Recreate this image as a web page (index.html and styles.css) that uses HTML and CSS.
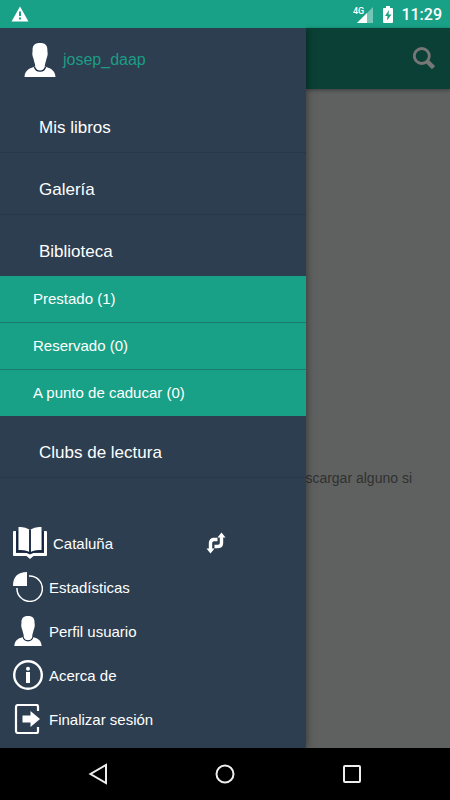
FILE: index.html
```html
<!DOCTYPE html>
<html lang="es">
<head>
<meta charset="utf-8">
<meta name="viewport" content="width=device-width, initial-scale=1">
<title>Biblioteca</title>
<link rel="stylesheet" href="styles.css">
</head>
<body>
<svg class="defs" aria-hidden="true">
  <symbol id="user" viewBox="0 0 32 34">
    <path d="M16 0C10.500 0 8.300 2.500 8.600 8C7.800 11 8.800 14 9.600 16C10 18.500 11 20 11.300 23.500C5 25.500 1 27 .5 34H31.500C31 27 27 25.500 20.700 23.500C21 20 22 18.500 22.400 16C23.200 14 24.200 11 23.400 8C23.700 2.500 21.500 0 16 0Z" fill="#fff"/>
    <path d="M10.500 24C12 29.500 20 29.500 21.500 24" fill="none" stroke="#14233f" stroke-width="1.300"/>
  </symbol>
</svg>
<div class="screen">
  <header class="status">
    <svg class="warning" viewBox="0 0 18 16" role="img" aria-label="Aviso"><path d="M9 .5L17.500 15.500H.5Z" fill="#fff"/><path d="M9 5.500V10M9 11.500V13.500" stroke="#19a187" stroke-width="2"/></svg>
    <svg class="signal" viewBox="0 0 20 17" role="img" aria-label="Señal">
      <path d="M20 1V17H4Z" fill="#74c6b7"/><path d="M14 7V17H4Z" fill="#fff"/>
      <text x="0" y="8" class="network">4G</text>
    </svg>
    <svg class="battery" viewBox="0 0 12 17" role="img" aria-label="Batería"><path d="M4 0H8V2H10Q11 2 11 3V16Q11 17 10 17H2Q1 17 1 16V3Q1 2 2 2H4Z" fill="#fff"/><path d="M7 4L3 10H5.500L5 14.500L9.500 8.500H6.500Z" fill="#19a187"/></svg>
    <time>11:29</time>
  </header>
  <div class="body">
    <nav class="drawer">
      <div class="account"><svg class="avatar" aria-hidden="true"><use href="#user"/></svg><span>josep_daap</span></div>
      <a class="item" href="#">Mis libros</a>
      <a class="item" href="#">Galería</a>
      <a class="item open" href="#">Biblioteca</a>
      <div class="sub">
        <a href="#">Prestado (1)</a>
        <a href="#">Reservado (0)</a>
        <a href="#">A punto de caducar (0)</a>
      </div>
      <a class="item" href="#">Clubs de lectura</a>
      <div class="tools">
        <div class="tool">
          <a class="library" href="#">
            <svg class="book" viewBox="0 0 34 32" aria-hidden="true">
              <path d="M0 5Q0 4 1 4H3V26H13.500Q16 26 17 27.500Q18 26 20.500 26H31V4H33Q34 4 34 5V28Q34 29 33 29H20.500L17 32L13.500 29H1Q0 29 0 28Z" fill="#fff"/>
              <path d="M5.500 0Q12-.3 16.300 2.500V25Q12 22.500 5.500 23Z M28.500 0Q22-.3 17.700 2.500V25Q22 22.500 28.500 23Z" fill="#fff"/>
              <path d="M4.200 4V24.500Q12 23.500 17 26.300Q22 23.500 29.800 24.500V4M17 3V25" fill="none" stroke="#14233f" stroke-width="1.600"/>
            </svg>Cataluña</a>
          <button class="swap" aria-label="Cambiar biblioteca"><svg viewBox="0 0 20 22" aria-hidden="true"><path d="M4.500 17V11Q4.500 7.500 8 7.500H11.500M15.500 5V11Q15.500 14.500 12 14.500H8.500" fill="none" stroke="#fff" stroke-width="3.400"/><path d="M.5 16.500H8.500L4.500 21.500ZM11.500 5.500H19.500L15.500 .5Z" fill="#fff"/></svg></button>
        </div>
        <a class="tool" href="#"><svg viewBox="0 0 30 30" aria-hidden="true"><path d="M16 4A12.700 12.700 0 1 1 4 16" fill="none" stroke="#fff" stroke-width="1.500"/><path d="M14 0V14H0Q0 0 14 0Z" fill="#fff"/></svg>Estadísticas</a>
        <a class="tool" href="#"><svg aria-hidden="true"><use href="#user"/></svg>Perfil usuario</a>
        <a class="tool" href="#"><svg viewBox="0 0 30 30" aria-hidden="true"><circle cx="15" cy="15" r="13.800" fill="none" stroke="#fff" stroke-width="2.400"/><circle cx="15" cy="8.800" r="2" fill="#fff"/><path d="M15 12V23" stroke="#fff" stroke-width="4"/></svg>Acerca de</a>
        <a class="tool" href="#"><svg viewBox="0 0 30 30" aria-hidden="true"><path d="M25 7V2.500Q25 1 23.500 1H5Q3 1 3 3V27Q3 29 5 29H23.500Q25 29 25 27.500V23" fill="none" stroke="#fff" stroke-width="2.200"/><path d="M9.500 11.500H17.500V7L27 15L17.500 23V18.500H9.500Z" fill="#fff"/></svg>Finalizar sesión</a>
      </div>
    </nav>
    <main class="page">
      <div class="toolbar"><button class="search" aria-label="Buscar"><svg viewBox="0 0 22 23" aria-hidden="true"><circle cx="8.800" cy="9" r="7.500" fill="none" stroke="#777" stroke-width="2.800"/><path d="M13.800 14L20.500 20.700" stroke="#777" stroke-width="4.400"/></svg></button></div>
      <p class="message">scargar alguno si</p>
    </main>
  </div>
  <footer class="system">
    <button aria-label="Atrás"><svg viewBox="0 0 20 22" aria-hidden="true"><path d="M18 2V20L2.500 11Z"/></svg></button>
    <button aria-label="Inicio"><svg viewBox="0 0 20 22" aria-hidden="true"><circle cx="10" cy="11" r="8.500"/></svg></button>
    <button aria-label="Recientes"><svg viewBox="0 0 20 22" aria-hidden="true"><rect x="2" y="3" width="16" height="16" rx="1"/></svg></button>
  </footer>
</div>
</body>
</html>
```
FILE: styles.css
```css
* { box-sizing: border-box; }
body { margin: 0; font-family: "Liberation Sans", Arial, sans-serif; }
a { color: inherit; text-decoration: none; }
button { border: 0; padding: 0; background: none; display: flex; }
svg { display: block; flex: none; }
.defs { position: absolute; width: 0; height: 0; }

.screen { min-height: 100vh; display: flex; flex-direction: column; }
.status {
  height: 28px; padding: 0 8px 0 11px; display: flex; align-items: center;
  background: #19a187; color: #fff;
}
.warning { width: 18px; height: 16px; margin-right: auto; }
.signal { width: 20px; height: 17px; overflow: visible; }
.network { font: 500 9px Roboto, sans-serif; fill: #fff; }
.battery { width: 12px; height: 17px; margin: 0 7px 0 9px; }
.status time { font: 500 16px Roboto, sans-serif; }

.body { flex: 1; display: flex; }
.drawer {
  flex: none; width: 68%; display: flex; flex-direction: column; z-index: 1;
  background: #2d3e50; color: #fff; box-shadow: 0 0 8px rgba(0, 0, 0, .5);
  clip-path: inset(0 -12px 0 0);
}
.account {
  height: 63px; padding-left: 24px; display: flex; align-items: center; gap: 7px;
  color: #1c9c85; font-size: 16px;
}
.avatar { width: 32px; height: 34px; }
.item {
  height: 62px; padding: 12px 0 0 39px; display: flex; align-items: center;
  border-bottom: 1px solid #28384a; font-size: 17px;
}
.open { height: 61px; border-bottom: 0; }
.sub { background: #19a187; font-size: 15px; }
.sub a { height: 46px; padding: 0 0 2px 33px; display: flex; align-items: center; }
.sub a + a { height: 47px; border-top: 1px solid #1b7a70; }
.tools { margin-top: auto; padding: 0 13px 7px; font-size: 15px; }
.tool { height: 44px; display: flex; align-items: center; gap: 6px; }
.tool > svg { width: 30px; height: 30px; }
.library { width: 187px; display: flex; align-items: center; gap: 6px; }
.book { width: 34px; height: 32px; }
.swap svg { width: 20px; height: 22px; }

.page { flex: 1; min-width: 0; display: flex; flex-direction: column; background: #5f6160; }
.toolbar {
  height: 61px; padding-right: 15px; display: flex; align-items: center; justify-content: flex-end;
  background: #0a4035; box-shadow: 0 1px 4px rgba(0, 0, 0, .4);
}
.search svg { width: 22px; height: 23px; }
.message {
  margin: auto 0; padding: 118px 38px 0 0; display: flex; justify-content: flex-end;
  white-space: nowrap; color: #2f3130; font-size: 14px;
}

.system { height: 52px; padding: 0 35px; display: flex; background: #000; }
.system button { flex: 1; align-items: center; justify-content: center; }
.system svg { width: 20px; height: 22px; fill: none; stroke: #eee; stroke-width: 2; }
```
